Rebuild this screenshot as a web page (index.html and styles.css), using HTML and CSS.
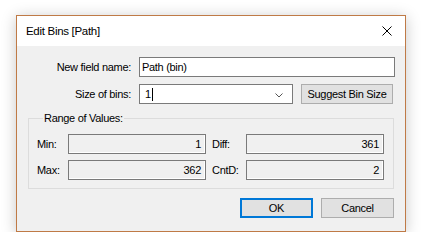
FILE: index.html
```html
<!DOCTYPE html>
<html>
<head>
<meta charset="utf-8">
<link rel="stylesheet" href="styles.css">
</head>
<body>
<div class="stage">
  <div class="dialog">
    <div class="titlebar">
      <span class="title">Edit Bins [Path]</span>
      <svg class="close" width="10" height="10" viewBox="0 0 10 10"><path d="M0.5 0.5 L9.5 9.5 M9.5 0.5 L0.5 9.5" stroke="#000" stroke-width="1" fill="none"/></svg>
    </div>
    <div class="body">
      <div class="form">
        <label class="lbl">New field name:</label>
        <div class="edit wide">Path (bin)</div>
        <label class="lbl">Size of bins:</label>
        <div class="row2">
          <div class="edit combo"><span>1</span><span class="caret"></span>
            <svg class="chev" width="8" height="5" viewBox="0 0 8 5"><path d="M0.5 0.5 L4 4 L7.5 0.5" stroke="#555" stroke-width="1" fill="none"/></svg>
          </div>
          <div class="btn suggest">Suggest Bin Size</div>
        </div>
      </div>
      <fieldset class="group">
        <legend>Range of Values:</legend>
        <div class="grid">
          <span class="glbl">Min:</span><div class="ro">1</div>
          <span class="glbl second">Diff:</span><div class="ro">361</div>
          <span class="glbl">Max:</span><div class="ro">362</div>
          <span class="glbl second">CntD:</span><div class="ro">2</div>
        </div>
      </fieldset>
      <div class="buttons">
        <div class="btn ok">OK</div>
        <div class="btn">Cancel</div>
      </div>
    </div>
  </div>
</div>
</body>
</html>
```

FILE: styles.css
```css
html, body {
  margin: 0;
  padding: 0;
  background: #ffffff;
}
body {
  font-family: "Liberation Sans", Arial, sans-serif;
  font-size: 11px;
  letter-spacing: -0.3px;
  color: #000;
}
.stage {
  padding: 15px 0 0 16px;
}
.dialog {
  width: 388px;
  height: 215px;
  border: 1px solid #bf7a46;
  background: #f0f0f0;
  box-shadow: 0 2px 14px rgba(0, 0, 0, 0.22);
  display: flex;
  flex-direction: column;
}
.titlebar {
  height: 30px;
  background: #fff;
  display: flex;
  align-items: center;
  justify-content: space-between;
  padding: 0 9px 0 9px;
}
.title {
  font-size: 11.5px;
}
.close {
  margin-right: 4px;
}
.body {
  flex: 1;
  padding: 11px 10px 0 11px;
  display: flex;
  flex-direction: column;
}
.form {
  display: grid;
  grid-template-columns: 103px 1fr;
  column-gap: 8px;
  row-gap: 7px;
  align-items: center;
}
.lbl {
  text-align: right;
}
.edit {
  height: 20px;
  box-sizing: border-box;
  border: 1px solid #7a7a7a;
  background: #fff;
  display: flex;
  align-items: center;
  padding-left: 2px;
}
.row2 {
  display: flex;
  gap: 8px;
}
.combo {
  width: 154px;
  padding-left: 5px;
  position: relative;
}
.caret {
  display: inline-block;
  width: 1px;
  height: 13px;
  background: #000;
  margin-left: 1px;
}
.chev {
  position: absolute;
  right: 9px;
  top: 8px;
}
.btn {
  height: 20px;
  box-sizing: border-box;
  border: 1px solid #adadad;
  background: #e1e1e1;
  display: flex;
  align-items: center;
  justify-content: center;
}
.suggest {
  width: 92px;
}
.group {
  margin: 6px 1px 0 0;
  padding: 8px 8px 8px 8px;
  border: 1px solid #dcdcdc;
  min-width: 0;
}
.group legend {
  padding: 0 1px;
  margin-left: 6px;
  line-height: 16px;
}
.grid {
  display: grid;
  grid-template-columns: 31px 138px 40px 138px;
  row-gap: 6px;
  align-items: center;
}
.second {
  padding-left: 6px;
}
.ro {
  height: 20px;
  box-sizing: border-box;
  border: 1px solid #7a7a7a;
  box-shadow: inset -1px -1px 0 #ffffff;
  background: #f0f0f0;
  display: flex;
  align-items: center;
  justify-content: flex-end;
  padding-right: 4px;
}
.buttons {
  display: flex;
  justify-content: flex-end;
  gap: 8px;
  margin-top: 9px;
  padding-right: 1px;
}
.buttons .btn {
  width: 73px;
}
.ok {
  border: 2px solid #0078d7;
}
```
